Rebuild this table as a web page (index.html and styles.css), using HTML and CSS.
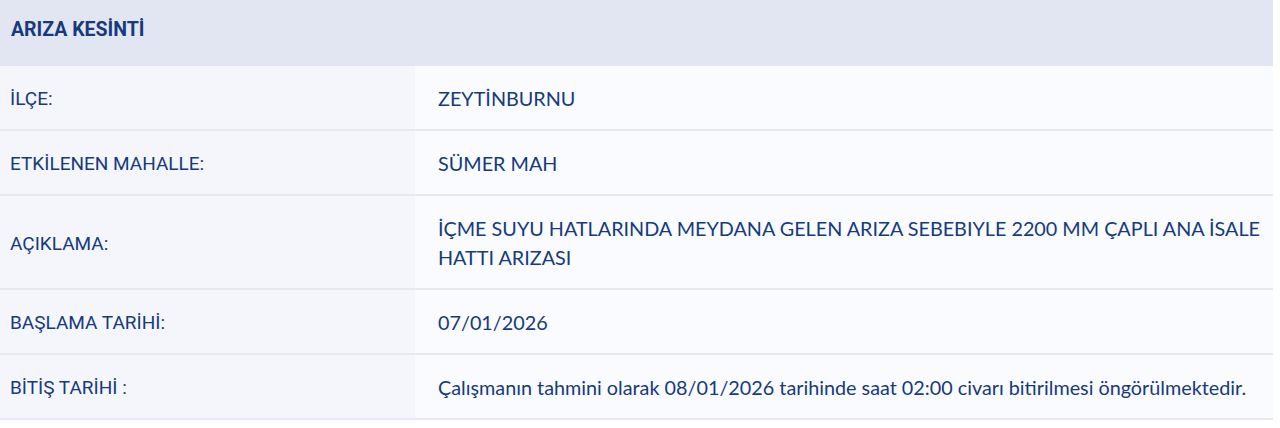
FILE: index.html
```html
<!DOCTYPE html>
<html lang="tr">
<head>
    <meta charset="UTF-8">
    <meta name="viewport" content="width=device-width, initial-scale=1.0">
    <title>Arıza Kesinti</title>
    <link rel="stylesheet" href="styles.css">
</head>
<body>
    <div class="kesinti">
        <div class="baslik">ARIZA KESİNTİ</div>

        <div class="satir">
            <div class="etiket">İLÇE:</div>
            <div class="deger">ZEYTİNBURNU</div>
        </div>
        <div class="satir">
            <div class="etiket">ETKİLENEN MAHALLE:</div>
            <div class="deger">SÜMER MAH</div>
        </div>
        <div class="satir">
            <div class="etiket">AÇIKLAMA:</div>
            <div class="deger">İÇME SUYU HATLARINDA MEYDANA GELEN ARIZA SEBEBIYLE 2200 MM ÇAPLI ANA İSALE HATTI ARIZASI</div>
        </div>
        <div class="satir">
            <div class="etiket">BAŞLAMA TARİHİ:</div>
            <div class="deger">07/01/2026</div>
        </div>
        <div class="satir">
            <div class="etiket">BİTİŞ TARİHİ :</div>
            <div class="deger">Çalışmanın tahmini olarak 08/01/2026 tarihinde saat 02:00 civarı bitirilmesi öngörülmektedir.</div>
        </div>
    </div>
</body>
</html>
```
FILE: styles.css
```css
body {
    margin: 0;
    background-color: #ffffff;
    font-family: Roboto, "Noto Sans", sans-serif;
    color: #163a7c;
}
.kesinti {
    width: 1273px;
}
.baslik {
    background-color: #e1e6f2;
    height: 66px;
    line-height: 60px;
    padding-left: 11px;
    font-size: 19.5px;
    font-weight: bold;
    color: #163a7c;
}
.satir {
    display: flex;
    border-bottom: 2px solid #e7e9ee;
}
.etiket {
    width: 405px;
    flex-shrink: 0;
    padding: 18px 0 16px 10px;
    background-color: #f4f6fc;
    font-size: 19px;
    line-height: 29px;
    display: flex;
    align-items: center;
}
.deger {
    flex: 1;
    padding: 18px 10px 16px 23px;
    background-color: #fafbfe;
    font-family: Lato, "Noto Sans", sans-serif;
    font-size: 19.8px;
    line-height: 29px;
}
```
